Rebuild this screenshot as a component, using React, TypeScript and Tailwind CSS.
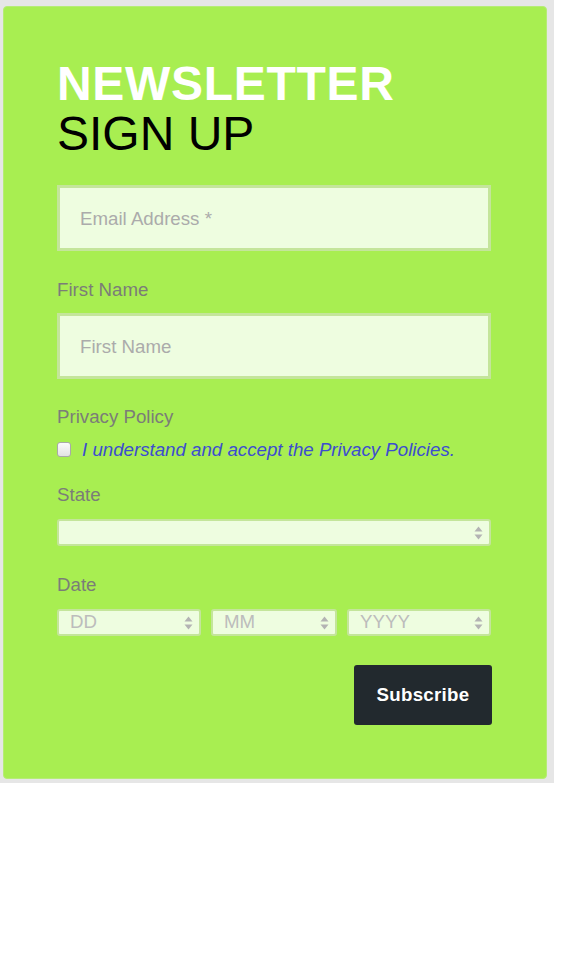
import React from "react";

const font = { fontFamily: '"Liberation Sans", Arial, Helvetica, sans-serif' };

function Arrows() {
  return (
    <svg width="9" height="14" viewBox="0 0 9 14" className="shrink-0">
      <path d="M4.5 0.5 L8.5 5.5 L0.5 5.5 Z" fill="#b3b3b3" />
      <path d="M4.5 13.5 L8.5 8.5 L0.5 8.5 Z" fill="#b3b3b3" />
    </svg>
  );
}

function FakeSelect({ text, className }: { text?: string; className: string }) {
  return (
    <div
      className={`h-[27px] flex items-center justify-between pl-[11px] pr-[6px] bg-[#eefde0] border-2 border-[#c4e59b] rounded-[3px] ${className}`}
    >
      <span className="text-[18.7px] leading-none text-[#bcbcbc]">{text ?? ""}</span>
      <Arrows />
    </div>
  );
}

export default function App() {
  return (
    <div className="w-full min-h-[960px] bg-white" style={font}>
      <div className="w-[554px] h-[783px] bg-[#e6e6e6] pt-[6px] pl-[3px]">
        <div className="w-[544px] h-[773px] bg-[#a8ee51] rounded-[4px] border border-[#b6ec76] pl-[53px] pr-[55px] pt-[52px]">
          <h1 className="text-[48px] leading-[50px]">
            <span className="block font-bold text-white tracking-[0.7px]">NEWSLETTER</span>
            <span className="block font-normal text-black">SIGN UP</span>
          </h1>

          <div className="mt-[26px] h-[66px] w-[434px] bg-[#eefde0] border-[3px] border-[#c4e59b] flex items-center pl-[20px] pt-[2px]">
            <span className="text-[18.7px] text-[#ababab]">Email Address *</span>
          </div>

          <div className="mt-[26px] text-[18.7px] leading-[26px] text-[#7b7d78]">First Name</div>

          <div className="mt-[10px] h-[66px] w-[434px] bg-[#eefde0] border-[3px] border-[#c4e59b] flex items-center pl-[20px] pt-[2px]">
            <span className="text-[18.7px] text-[#ababab]">First Name</span>
          </div>

          <div className="mt-[25px] text-[18.7px] leading-[26px] text-[#7b7d78]">Privacy Policy</div>

          <div className="mt-[6px] flex items-center h-[26px]">
            <div className="w-[14px] h-[15px] rounded-[3px] border border-[#a9a9a9] bg-gradient-to-b from-[#fbfbfb] to-[#e3e3e3] mr-[11px]" />
            <span className="text-[18.7px] italic text-[#3c4dcf] pt-[2px]">
              I understand and accept the Privacy Policies.
            </span>
          </div>

          <div className="mt-[20px] text-[18.7px] leading-[26px] text-[#7b7d78]">State</div>

          <FakeSelect className="mt-[11px] w-[434px]" />

          <div className="mt-[26px] text-[18.7px] leading-[26px] text-[#7b7d78]">Date</div>

          <div className="mt-[11px] flex gap-[10px] w-[434px]">
            <FakeSelect text="DD" className="w-[144px]" />
            <FakeSelect text="MM" className="w-[126px]" />
            <FakeSelect text="YYYY" className="w-[144px]" />
          </div>

          <div className="mt-[29px] flex justify-end w-[435px]">
            <button className="w-[138px] h-[60px] bg-[#22292e] rounded-[3px] text-white font-bold text-[18.7px] tracking-[0.3px]">
              Subscribe
            </button>
          </div>
        </div>
      </div>
    </div>
  );
}
